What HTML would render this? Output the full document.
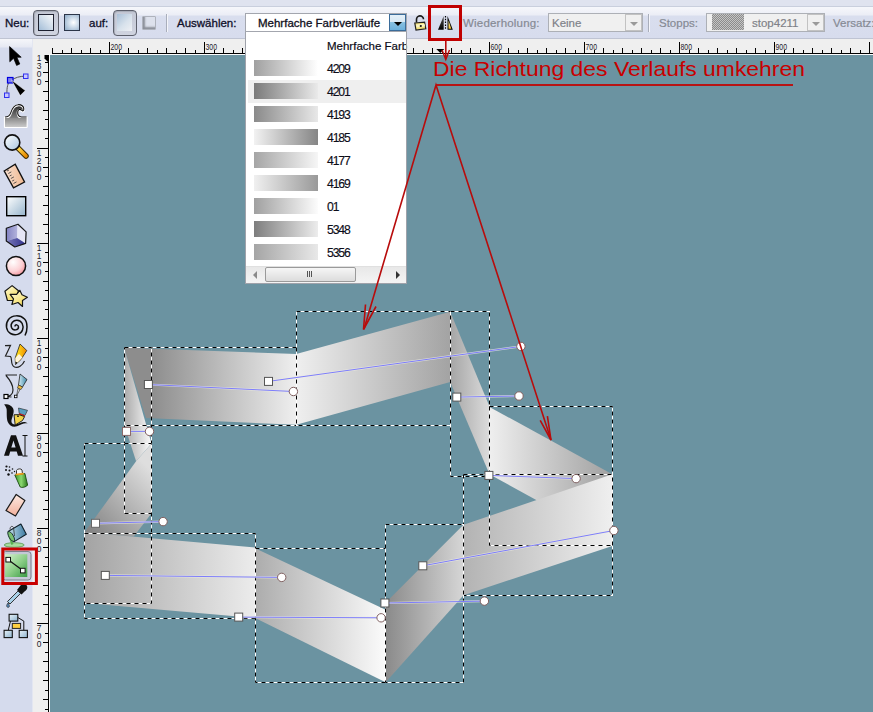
<!DOCTYPE html>
<html><head><meta charset="utf-8">
<style>
*{margin:0;padding:0;box-sizing:border-box}
html,body{width:873px;height:712px;overflow:hidden;background:#6b93a1;font-family:"Liberation Sans",sans-serif}
.a{position:absolute}
#top{left:0;top:0;width:873px;height:39px;background:linear-gradient(#dfe3ef 0,#dfe3ef 6px,#c9cfdd 6px,#c9cfdd 7px,#f6f7fb 7px,#eceef6 14.5px,#d9deee 16.5px,#d7dced 38px,#bfc4d3 38px,#bfc4d3 39px)}
.lbl{font-size:11.5px;color:#10102a;top:16px;white-space:nowrap;line-height:14px;-webkit-text-stroke:0.3px #10102a}
.dis{color:#868a94;-webkit-text-stroke:0.2px #868a94}
#lt{left:0;top:39px;width:33px;height:673px;border-right:1px solid #e3e6f1;background:linear-gradient(#f5f6fa 0,#e6e9f3 8px,#d5dbed 9px,#d5dbed 100%)}
#hr{left:33px;top:39px;width:840px;height:16px;background:#efefef}
#vr{left:33px;top:39px;width:16px;height:673px;background:#efefef}
#cv{left:50px;top:55px;width:823px;height:657px;background:#6b93a1}
.btnp{border:1px solid #5c5f6b;border-radius:4px;background:linear-gradient(#c4c8d5,#d0d4e0);box-shadow:inset 1px 1px 1px #a8acb8}
.sep{width:2px;border-left:1px solid #a9aebb;border-right:1px solid #f4f5fa}
.combo{background:#fff;border:1px solid #a3a6ae}
.comboD{background:#f0f0f0;border:1px solid #adb0b6}
.ddd{border-left:1px solid #c6c6c6;background:#f0f0f0}
.gtri{width:0;height:0;border-left:4px solid transparent;border-right:4px solid transparent;border-top:4px solid #9a9a9a}
</style></head><body>
<div id="top" class="a"></div>
<div id="lt" class="a"></div>
<div id="hr" class="a"></div>
<div id="vr" class="a"></div>
<div id="cv" class="a"></div>
<svg class="a" style="left:0;top:0" width="873" height="712" viewBox="0 0 873 712"><defs>
<linearGradient id="gA" gradientUnits="userSpaceOnUse" x1="151" y1="0" x2="296.5" y2="0"><stop offset="0" stop-color="#8d8d8d"/><stop offset="1" stop-color="#efefef"/></linearGradient>
<linearGradient id="gJ" gradientUnits="userSpaceOnUse" x1="125" y1="0" x2="150" y2="0"><stop offset="0" stop-color="#acacac"/><stop offset="1" stop-color="#f6f6f6"/></linearGradient>
<linearGradient id="gI" gradientUnits="userSpaceOnUse" x1="90" y1="530" x2="151" y2="470"><stop offset="0" stop-color="#868686"/><stop offset="1" stop-color="#dedede"/></linearGradient>
<linearGradient id="gH" gradientUnits="userSpaceOnUse" x1="84" y1="0" x2="255" y2="0"><stop offset="0" stop-color="#a3a3a3"/><stop offset="1" stop-color="#ececec"/></linearGradient>
<linearGradient id="gG" gradientUnits="userSpaceOnUse" x1="255" y1="0" x2="385.6" y2="0"><stop offset="0" stop-color="#acacac"/><stop offset="1" stop-color="#fbfbfb"/></linearGradient>
<linearGradient id="gF" gradientUnits="userSpaceOnUse" x1="385.6" y1="0" x2="463.5" y2="0"><stop offset="0" stop-color="#8a8a8a"/><stop offset="1" stop-color="#d6d6d6"/></linearGradient>
<linearGradient id="gD" gradientUnits="userSpaceOnUse" x1="489.4" y1="0" x2="612.3" y2="0"><stop offset="0" stop-color="#efefef"/><stop offset="1" stop-color="#a0a0a0"/></linearGradient>
<linearGradient id="gE" gradientUnits="userSpaceOnUse" x1="463.5" y1="0" x2="612.3" y2="0"><stop offset="0" stop-color="#b3b3b3"/><stop offset="1" stop-color="#efefef"/></linearGradient>
<linearGradient id="gB" gradientUnits="userSpaceOnUse" x1="296.3" y1="0" x2="450.2" y2="0"><stop offset="0" stop-color="#efefef"/><stop offset="1" stop-color="#a3a3a3"/></linearGradient>
<linearGradient id="gC" gradientUnits="userSpaceOnUse" x1="450.2" y1="0" x2="489.5" y2="0"><stop offset="0" stop-color="#a5a5a5"/><stop offset="1" stop-color="#dcdcdc"/></linearGradient>
</defs>
<polygon fill="url(#gA)" points="124.2,347.8 296.5,354 296.5,424.8 146,418"/>
<polygon fill="url(#gJ)" points="124.2,347.8 151.5,443.4 136.1,461.3 124.3,425"/>
<polygon fill="url(#gI)" points="151.5,443.4 151.6,513.3 133.7,536.5 84.3,532.6 136.1,461.3"/>
<polygon fill="url(#gH)" points="84.3,532.3 255.1,547.6 255.1,617.9 84.3,603"/>
<polygon fill="url(#gG)" points="255.1,548.2 385.6,609.7 385.6,682.3 255.1,617.9"/>
<polygon fill="url(#gF)" points="463.5,524.8 463.5,595.2 385.6,682.3 385.6,602.8"/>
<polygon fill="url(#gD)" points="489.4,406.9 612.3,474.3 612.3,541.7 489.4,474.3"/>
<polygon fill="url(#gE)" points="463.5,524.8 612.3,474.3 612.3,545.9 463.5,595.2"/>
<polygon fill="url(#gB)" points="296.3,354 450.2,311.8 450.2,382 296.3,424.8"/>
<polygon fill="url(#gC)" points="450.2,311.8 489.5,406.6 489.5,474.3 450.2,382"/>
<rect x="124.5" y="347.5" width="172.0" height="78.0" fill="none" stroke="#fff" stroke-width="1"/>
<rect x="124.5" y="347.5" width="172.0" height="78.0" fill="none" stroke="#000" stroke-width="1" stroke-dasharray="4 4"/>
<rect x="124.5" y="347.5" width="27.0" height="166.0" fill="none" stroke="#fff" stroke-width="1"/>
<rect x="124.5" y="347.5" width="27.0" height="166.0" fill="none" stroke="#000" stroke-width="1" stroke-dasharray="4 4"/>
<rect x="84.5" y="443.5" width="67.0" height="160.0" fill="none" stroke="#fff" stroke-width="1"/>
<rect x="84.5" y="443.5" width="67.0" height="160.0" fill="none" stroke="#000" stroke-width="1" stroke-dasharray="4 4"/>
<rect x="84.5" y="533.5" width="171.0" height="85.0" fill="none" stroke="#fff" stroke-width="1"/>
<rect x="84.5" y="533.5" width="171.0" height="85.0" fill="none" stroke="#000" stroke-width="1" stroke-dasharray="4 4"/>
<rect x="255.5" y="548.5" width="130.0" height="134.0" fill="none" stroke="#fff" stroke-width="1"/>
<rect x="255.5" y="548.5" width="130.0" height="134.0" fill="none" stroke="#000" stroke-width="1" stroke-dasharray="4 4"/>
<rect x="296.5" y="311.5" width="154.0" height="114.0" fill="none" stroke="#fff" stroke-width="1"/>
<rect x="296.5" y="311.5" width="154.0" height="114.0" fill="none" stroke="#000" stroke-width="1" stroke-dasharray="4 4"/>
<rect x="450.5" y="311.5" width="39.0" height="165.0" fill="none" stroke="#fff" stroke-width="1"/>
<rect x="450.5" y="311.5" width="39.0" height="165.0" fill="none" stroke="#000" stroke-width="1" stroke-dasharray="4 4"/>
<rect x="489.5" y="406.5" width="123.0" height="139.0" fill="none" stroke="#fff" stroke-width="1"/>
<rect x="489.5" y="406.5" width="123.0" height="139.0" fill="none" stroke="#000" stroke-width="1" stroke-dasharray="4 4"/>
<rect x="463.5" y="474.5" width="149.0" height="121.0" fill="none" stroke="#fff" stroke-width="1"/>
<rect x="463.5" y="474.5" width="149.0" height="121.0" fill="none" stroke="#000" stroke-width="1" stroke-dasharray="4 4"/>
<rect x="385.5" y="524.5" width="78.0" height="158.0" fill="none" stroke="#fff" stroke-width="1"/>
<rect x="385.5" y="524.5" width="78.0" height="158.0" fill="none" stroke="#000" stroke-width="1" stroke-dasharray="4 4"/>
<line x1="148.4" y1="384.5" x2="293.4" y2="391.5" stroke="#ecece0" stroke-opacity="0.75" stroke-width="2.2"/>
<line x1="148.4" y1="384.5" x2="293.4" y2="391.5" stroke="#7070ff" stroke-width="0.9"/>
<line x1="268.5" y1="381.4" x2="520.9" y2="346.4" stroke="#ecece0" stroke-opacity="0.75" stroke-width="2.2"/>
<line x1="268.5" y1="381.4" x2="520.9" y2="346.4" stroke="#7070ff" stroke-width="0.9"/>
<line x1="456.8" y1="397.1" x2="519" y2="396" stroke="#ecece0" stroke-opacity="0.75" stroke-width="2.2"/>
<line x1="456.8" y1="397.1" x2="519" y2="396" stroke="#7070ff" stroke-width="0.9"/>
<line x1="126.5" y1="431.4" x2="149.5" y2="431.4" stroke="#ecece0" stroke-opacity="0.75" stroke-width="2.2"/>
<line x1="126.5" y1="431.4" x2="149.5" y2="431.4" stroke="#7070ff" stroke-width="0.9"/>
<line x1="95.5" y1="523.3" x2="163.1" y2="521.6" stroke="#ecece0" stroke-opacity="0.75" stroke-width="2.2"/>
<line x1="95.5" y1="523.3" x2="163.1" y2="521.6" stroke="#7070ff" stroke-width="0.9"/>
<line x1="105.3" y1="575.4" x2="281.7" y2="577.4" stroke="#ecece0" stroke-opacity="0.75" stroke-width="2.2"/>
<line x1="105.3" y1="575.4" x2="281.7" y2="577.4" stroke="#7070ff" stroke-width="0.9"/>
<line x1="238.7" y1="617.1" x2="381.1" y2="617.8" stroke="#ecece0" stroke-opacity="0.75" stroke-width="2.2"/>
<line x1="238.7" y1="617.1" x2="381.1" y2="617.8" stroke="#7070ff" stroke-width="0.9"/>
<line x1="384.9" y1="603" x2="484.4" y2="601.1" stroke="#ecece0" stroke-opacity="0.75" stroke-width="2.2"/>
<line x1="384.9" y1="603" x2="484.4" y2="601.1" stroke="#7070ff" stroke-width="0.9"/>
<line x1="422.8" y1="565.8" x2="613.9" y2="530.5" stroke="#ecece0" stroke-opacity="0.75" stroke-width="2.2"/>
<line x1="422.8" y1="565.8" x2="613.9" y2="530.5" stroke="#7070ff" stroke-width="0.9"/>
<line x1="488.9" y1="475.4" x2="576.1" y2="478.6" stroke="#ecece0" stroke-opacity="0.75" stroke-width="2.2"/>
<line x1="488.9" y1="475.4" x2="576.1" y2="478.6" stroke="#7070ff" stroke-width="0.9"/>
<rect x="144.4" y="380.5" width="8" height="8" fill="#fff" stroke="#555" stroke-width="1"/>
<circle cx="293.4" cy="391.5" r="4.2" fill="#fff" stroke="#806060" stroke-width="1"/>
<rect x="264.5" y="377.4" width="8" height="8" fill="#fff" stroke="#555" stroke-width="1"/>
<circle cx="520.9" cy="346.4" r="4.2" fill="#fff" stroke="#806060" stroke-width="1"/>
<rect x="452.8" y="393.1" width="8" height="8" fill="#fff" stroke="#555" stroke-width="1"/>
<circle cx="519" cy="396" r="4.2" fill="#fff" stroke="#806060" stroke-width="1"/>
<rect x="122.5" y="427.4" width="8" height="8" fill="#fff" stroke="#8a6a6a" stroke-width="1"/>
<circle cx="149.5" cy="431.4" r="4.2" fill="#fff" stroke="#806060" stroke-width="1"/>
<rect x="91.5" y="519.3" width="8" height="8" fill="#fff" stroke="#666" stroke-width="1"/>
<circle cx="163.1" cy="521.6" r="4.2" fill="#fff" stroke="#806060" stroke-width="1"/>
<rect x="101.3" y="571.4" width="8" height="8" fill="#fff" stroke="#555" stroke-width="1"/>
<circle cx="281.7" cy="577.4" r="4.2" fill="#fff" stroke="#806060" stroke-width="1"/>
<rect x="234.7" y="613.1" width="8" height="8" fill="#fff" stroke="#555" stroke-width="1"/>
<circle cx="381.1" cy="617.8" r="4.2" fill="#fff" stroke="#806060" stroke-width="1"/>
<rect x="380.9" y="599" width="8" height="8" fill="#fff" stroke="#555" stroke-width="1"/>
<circle cx="484.4" cy="601.1" r="4.2" fill="#fff" stroke="#806060" stroke-width="1"/>
<rect x="418.8" y="561.8" width="8" height="8" fill="#fff" stroke="#555" stroke-width="1"/>
<circle cx="613.9" cy="530.5" r="4.2" fill="#fff" stroke="#806060" stroke-width="1"/>
<rect x="484.9" y="471.4" width="8" height="8" fill="#fff" stroke="#555" stroke-width="1"/>
<circle cx="576.1" cy="478.6" r="4.2" fill="#fff" stroke="#806060" stroke-width="1"/>
</svg>

<!-- toolbar -->
<div class="a lbl" style="left:5px">Neu:</div>
<div class="a btnp" style="left:33px;top:10px;width:26px;height:26px"></div>
<div class="a" style="left:38px;top:14px;width:16px;height:17px;border:1.6px solid #1d2030;background:linear-gradient(45deg,#a3bdd7 0,#d4e0ec 55%,#f6f8fb 100%)"></div>
<div class="a" style="left:64px;top:14px;width:16px;height:17px;border:1.4px solid #2c3548;background:radial-gradient(circle at 60% 50%,#ffffff 0,#d6e2ee 35%,#8eabc8 100%)"></div>
<div class="a lbl" style="left:89px">auf:</div>
<div class="a btnp" style="left:113px;top:10px;width:24px;height:26px"></div>
<div class="a" style="left:117px;top:14px;width:15px;height:17px;background:linear-gradient(135deg,#a9c0d8 0,#d8e2ec 55%,#eef0f4 100%)"></div>
<div class="a" style="left:142px;top:16px;width:14px;height:14px;border:1px solid #aeb2bc;border-radius:1px;background:#dde1ec;box-shadow:inset 2px -2px 2px #8c909a"></div>
<div class="a sep" style="left:166px;top:14px;height:18px"></div>
<div class="a lbl" style="left:177px">Auswählen:</div>
<div class="a combo" style="left:245px;top:13px;width:162px;height:19px"></div>
<div class="a lbl" style="left:258px;top:16px;color:#111">Mehrfache Farbverläufe</div>
<div class="a" style="left:389px;top:14px;width:17px;height:17px;border:1px solid #3b6c9a;background:linear-gradient(#e4f0f8 0,#d8e8f4 45%,#88c0e0 50%,#6cb0dc 100%)"></div>
<div class="a" style="left:394px;top:22px;width:0;height:0;border-left:4px solid transparent;border-right:4px solid transparent;border-top:4.5px solid #000"></div>
<svg class="a" style="left:412px;top:14px" width="16" height="18" viewBox="0 0 16 18">
 <path d="M4.5 8.5 V5.5 A3.5 3.5 0 0 1 11.5 5.2" fill="none" stroke="#1a1a1a" stroke-width="1.6"/>
 <path d="M2.8 9 L12.6 8.2 L13.8 14.8 L4 16 Z" fill="#f2e07a" stroke="#202020" stroke-width="1.2"/>
 <path d="M4 10.5 L12.5 9.8 L13.2 12.5 L4.6 13.6Z" fill="#fbf4c0"/>
 <circle cx="8.8" cy="12" r="1.1" fill="#111"/>
</svg>
<svg class="a" style="left:436px;top:14px" width="20" height="18" viewBox="0 0 20 18">
 <defs><linearGradient id="fl1" x1="0" y1="0" x2="0" y2="1"><stop offset="0" stop-color="#555"/><stop offset="1" stop-color="#000"/></linearGradient>
 <linearGradient id="fl2" x1="0" y1="0" x2="0" y2="1"><stop offset="0" stop-color="#fff6b0"/><stop offset="1" stop-color="#f0c030"/></linearGradient></defs>
 <path d="M2 15.7 L7.7 2 L7.7 15.7Z" fill="url(#fl1)"/>
 <path d="M11.5 2 L16.8 15.7 L11.5 15.7Z" fill="#000"/>
 <path d="M12.5 6.5 L15.3 14.8 L12.5 14.8Z" fill="url(#fl2)"/>
 <line x1="9.5" y1="2" x2="9.5" y2="16" stroke="#000" stroke-width="1.2" stroke-dasharray="1.5 1.3"/>
</svg>
<div class="a" style="left:428px;top:5px;width:34px;height:36px;border:3px solid #c00000"></div>
<div class="a lbl dis" style="left:463px;letter-spacing:0.2px">Wiederholung:</div>
<div class="a comboD" style="left:548px;top:13px;width:95px;height:19px"></div>
<div class="a lbl dis" style="left:552px;color:#7e7e84">Keine</div>
<div class="a ddd" style="left:625px;top:14px;width:17px;height:17px;border:1px solid #c2c2c2"></div>
<div class="a gtri" style="left:630px;top:22px"></div>
<div class="a sep" style="left:648px;top:14px;height:18px"></div>
<div class="a lbl dis" style="left:659px">Stopps:</div>
<div class="a comboD" style="left:706px;top:13px;width:119px;height:19px"></div>
<div class="a" style="left:712px;top:14px;width:32px;height:16px;background-color:#aaa;background-image:repeating-conic-gradient(#8c8c8c 0 25%,#c4c4c4 0 50%);background-size:2px 2px"></div>
<div class="a lbl dis" style="left:752px;color:#7e7e84">stop4211</div>
<div class="a ddd" style="left:807px;top:14px;width:17px;height:17px;border:1px solid #c2c2c2"></div>
<div class="a gtri" style="left:812px;top:22px"></div>
<div class="a lbl dis" style="left:833px">Versatz:</div>

<svg class="a" style="left:0;top:39px" width="873" height="17" viewBox="0 39 873 17">
<rect x="52" y="53" width="821" height="1" fill="#000"/>
<rect x="49" y="54" width="824" height="1" fill="#fafafa"/>
<rect x="52" y="48" width="1" height="5" fill="#000"/>
<rect x="62" y="50" width="1" height="3" fill="#000"/>
<rect x="71" y="48" width="1" height="5" fill="#000"/>
<rect x="81" y="50" width="1" height="3" fill="#000"/>
<rect x="90" y="48" width="1" height="5" fill="#000"/>
<rect x="100" y="50" width="1" height="3" fill="#000"/>
<rect x="109" y="42" width="1" height="11" fill="#000"/>
<rect x="119" y="50" width="1" height="3" fill="#000"/>
<rect x="128" y="48" width="1" height="5" fill="#000"/>
<rect x="138" y="50" width="1" height="3" fill="#000"/>
<rect x="147" y="48" width="1" height="5" fill="#000"/>
<rect x="157" y="50" width="1" height="3" fill="#000"/>
<rect x="166" y="48" width="1" height="5" fill="#000"/>
<rect x="176" y="50" width="1" height="3" fill="#000"/>
<rect x="185" y="48" width="1" height="5" fill="#000"/>
<rect x="195" y="50" width="1" height="3" fill="#000"/>
<rect x="204" y="42" width="1" height="11" fill="#000"/>
<rect x="214" y="50" width="1" height="3" fill="#000"/>
<rect x="223" y="48" width="1" height="5" fill="#000"/>
<rect x="233" y="50" width="1" height="3" fill="#000"/>
<rect x="242" y="48" width="1" height="5" fill="#000"/>
<rect x="252" y="50" width="1" height="3" fill="#000"/>
<rect x="261" y="48" width="1" height="5" fill="#000"/>
<rect x="271" y="50" width="1" height="3" fill="#000"/>
<rect x="280" y="48" width="1" height="5" fill="#000"/>
<rect x="290" y="50" width="1" height="3" fill="#000"/>
<rect x="299" y="42" width="1" height="11" fill="#000"/>
<rect x="309" y="50" width="1" height="3" fill="#000"/>
<rect x="318" y="48" width="1" height="5" fill="#000"/>
<rect x="328" y="50" width="1" height="3" fill="#000"/>
<rect x="337" y="48" width="1" height="5" fill="#000"/>
<rect x="347" y="50" width="1" height="3" fill="#000"/>
<rect x="356" y="48" width="1" height="5" fill="#000"/>
<rect x="366" y="50" width="1" height="3" fill="#000"/>
<rect x="375" y="48" width="1" height="5" fill="#000"/>
<rect x="385" y="50" width="1" height="3" fill="#000"/>
<rect x="394" y="42" width="1" height="11" fill="#000"/>
<rect x="404" y="50" width="1" height="3" fill="#000"/>
<rect x="413" y="48" width="1" height="5" fill="#000"/>
<rect x="423" y="50" width="1" height="3" fill="#000"/>
<rect x="432" y="48" width="1" height="5" fill="#000"/>
<rect x="442" y="50" width="1" height="3" fill="#000"/>
<rect x="451" y="48" width="1" height="5" fill="#000"/>
<rect x="461" y="50" width="1" height="3" fill="#000"/>
<rect x="470" y="48" width="1" height="5" fill="#000"/>
<rect x="480" y="50" width="1" height="3" fill="#000"/>
<rect x="489" y="42" width="1" height="11" fill="#000"/>
<rect x="499" y="50" width="1" height="3" fill="#000"/>
<rect x="508" y="48" width="1" height="5" fill="#000"/>
<rect x="518" y="50" width="1" height="3" fill="#000"/>
<rect x="527" y="48" width="1" height="5" fill="#000"/>
<rect x="537" y="50" width="1" height="3" fill="#000"/>
<rect x="546" y="48" width="1" height="5" fill="#000"/>
<rect x="556" y="50" width="1" height="3" fill="#000"/>
<rect x="565" y="48" width="1" height="5" fill="#000"/>
<rect x="575" y="50" width="1" height="3" fill="#000"/>
<rect x="584" y="42" width="1" height="11" fill="#000"/>
<rect x="594" y="50" width="1" height="3" fill="#000"/>
<rect x="603" y="48" width="1" height="5" fill="#000"/>
<rect x="613" y="50" width="1" height="3" fill="#000"/>
<rect x="622" y="48" width="1" height="5" fill="#000"/>
<rect x="632" y="50" width="1" height="3" fill="#000"/>
<rect x="641" y="48" width="1" height="5" fill="#000"/>
<rect x="651" y="50" width="1" height="3" fill="#000"/>
<rect x="660" y="48" width="1" height="5" fill="#000"/>
<rect x="670" y="50" width="1" height="3" fill="#000"/>
<rect x="679" y="42" width="1" height="11" fill="#000"/>
<rect x="689" y="50" width="1" height="3" fill="#000"/>
<rect x="698" y="48" width="1" height="5" fill="#000"/>
<rect x="708" y="50" width="1" height="3" fill="#000"/>
<rect x="717" y="48" width="1" height="5" fill="#000"/>
<rect x="727" y="50" width="1" height="3" fill="#000"/>
<rect x="736" y="48" width="1" height="5" fill="#000"/>
<rect x="746" y="50" width="1" height="3" fill="#000"/>
<rect x="755" y="48" width="1" height="5" fill="#000"/>
<rect x="765" y="50" width="1" height="3" fill="#000"/>
<rect x="774" y="42" width="1" height="11" fill="#000"/>
<rect x="784" y="50" width="1" height="3" fill="#000"/>
<rect x="793" y="48" width="1" height="5" fill="#000"/>
<rect x="803" y="50" width="1" height="3" fill="#000"/>
<rect x="812" y="48" width="1" height="5" fill="#000"/>
<rect x="822" y="50" width="1" height="3" fill="#000"/>
<rect x="831" y="48" width="1" height="5" fill="#000"/>
<rect x="841" y="50" width="1" height="3" fill="#000"/>
<rect x="850" y="48" width="1" height="5" fill="#000"/>
<rect x="860" y="50" width="1" height="3" fill="#000"/>
<rect x="869" y="42" width="1" height="11" fill="#000"/>
<text x="110.5" y="50.3" font-size="8.6" textLength="11.5" lengthAdjust="spacingAndGlyphs" fill="#1a1a2a" font-family="Liberation Sans">200</text>
<text x="205.5" y="50.3" font-size="8.6" textLength="11.5" lengthAdjust="spacingAndGlyphs" fill="#1a1a2a" font-family="Liberation Sans">300</text>
<text x="300.5" y="50.3" font-size="8.6" textLength="11.5" lengthAdjust="spacingAndGlyphs" fill="#1a1a2a" font-family="Liberation Sans">400</text>
<text x="395.5" y="50.3" font-size="8.6" textLength="11.5" lengthAdjust="spacingAndGlyphs" fill="#1a1a2a" font-family="Liberation Sans">500</text>
<text x="490.5" y="50.3" font-size="8.6" textLength="11.5" lengthAdjust="spacingAndGlyphs" fill="#1a1a2a" font-family="Liberation Sans">600</text>
<text x="585.5" y="50.3" font-size="8.6" textLength="11.5" lengthAdjust="spacingAndGlyphs" fill="#1a1a2a" font-family="Liberation Sans">700</text>
<text x="680.5" y="50.3" font-size="8.6" textLength="11.5" lengthAdjust="spacingAndGlyphs" fill="#1a1a2a" font-family="Liberation Sans">800</text>
<text x="775.5" y="50.3" font-size="8.6" textLength="11.5" lengthAdjust="spacingAndGlyphs" fill="#1a1a2a" font-family="Liberation Sans">900</text>
<path d="M436.3 49 L444.3 49 L440.3 53 Z" fill="#000"/>
</svg>
<svg class="a" style="left:0;top:0" width="50" height="712" viewBox="0 0 50 712">
<rect x="48" y="55" width="1" height="657" fill="#000"/>
<rect x="49" y="55" width="1" height="657" fill="#fafafa"/>
<rect x="45" y="62" width="3" height="1" fill="#000"/>
<rect x="43" y="72" width="5" height="1" fill="#000"/>
<rect x="45" y="81" width="3" height="1" fill="#000"/>
<rect x="43" y="91" width="5" height="1" fill="#000"/>
<rect x="45" y="100" width="3" height="1" fill="#000"/>
<rect x="43" y="110" width="5" height="1" fill="#000"/>
<rect x="45" y="119" width="3" height="1" fill="#000"/>
<rect x="43" y="129" width="5" height="1" fill="#000"/>
<rect x="45" y="138" width="3" height="1" fill="#000"/>
<rect x="37" y="148" width="11" height="1" fill="#000"/>
<rect x="45" y="157" width="3" height="1" fill="#000"/>
<rect x="43" y="167" width="5" height="1" fill="#000"/>
<rect x="45" y="176" width="3" height="1" fill="#000"/>
<rect x="43" y="186" width="5" height="1" fill="#000"/>
<rect x="45" y="195" width="3" height="1" fill="#000"/>
<rect x="43" y="205" width="5" height="1" fill="#000"/>
<rect x="45" y="214" width="3" height="1" fill="#000"/>
<rect x="43" y="224" width="5" height="1" fill="#000"/>
<rect x="45" y="233" width="3" height="1" fill="#000"/>
<rect x="37" y="243" width="11" height="1" fill="#000"/>
<rect x="45" y="252" width="3" height="1" fill="#000"/>
<rect x="43" y="262" width="5" height="1" fill="#000"/>
<rect x="45" y="271" width="3" height="1" fill="#000"/>
<rect x="43" y="281" width="5" height="1" fill="#000"/>
<rect x="45" y="290" width="3" height="1" fill="#000"/>
<rect x="43" y="300" width="5" height="1" fill="#000"/>
<rect x="45" y="309" width="3" height="1" fill="#000"/>
<rect x="43" y="319" width="5" height="1" fill="#000"/>
<rect x="45" y="328" width="3" height="1" fill="#000"/>
<rect x="37" y="338" width="11" height="1" fill="#000"/>
<rect x="45" y="348" width="3" height="1" fill="#000"/>
<rect x="43" y="357" width="5" height="1" fill="#000"/>
<rect x="45" y="367" width="3" height="1" fill="#000"/>
<rect x="43" y="376" width="5" height="1" fill="#000"/>
<rect x="45" y="386" width="3" height="1" fill="#000"/>
<rect x="43" y="395" width="5" height="1" fill="#000"/>
<rect x="45" y="405" width="3" height="1" fill="#000"/>
<rect x="43" y="414" width="5" height="1" fill="#000"/>
<rect x="45" y="424" width="3" height="1" fill="#000"/>
<rect x="37" y="433" width="11" height="1" fill="#000"/>
<rect x="45" y="443" width="3" height="1" fill="#000"/>
<rect x="43" y="452" width="5" height="1" fill="#000"/>
<rect x="45" y="462" width="3" height="1" fill="#000"/>
<rect x="43" y="471" width="5" height="1" fill="#000"/>
<rect x="45" y="481" width="3" height="1" fill="#000"/>
<rect x="43" y="490" width="5" height="1" fill="#000"/>
<rect x="45" y="500" width="3" height="1" fill="#000"/>
<rect x="43" y="509" width="5" height="1" fill="#000"/>
<rect x="45" y="519" width="3" height="1" fill="#000"/>
<rect x="37" y="528" width="11" height="1" fill="#000"/>
<rect x="45" y="538" width="3" height="1" fill="#000"/>
<rect x="43" y="547" width="5" height="1" fill="#000"/>
<rect x="45" y="557" width="3" height="1" fill="#000"/>
<rect x="43" y="566" width="5" height="1" fill="#000"/>
<rect x="45" y="576" width="3" height="1" fill="#000"/>
<rect x="43" y="585" width="5" height="1" fill="#000"/>
<rect x="45" y="595" width="3" height="1" fill="#000"/>
<rect x="43" y="604" width="5" height="1" fill="#000"/>
<rect x="45" y="614" width="3" height="1" fill="#000"/>
<rect x="37" y="623" width="11" height="1" fill="#000"/>
<rect x="45" y="633" width="3" height="1" fill="#000"/>
<rect x="43" y="642" width="5" height="1" fill="#000"/>
<rect x="45" y="652" width="3" height="1" fill="#000"/>
<rect x="43" y="661" width="5" height="1" fill="#000"/>
<rect x="45" y="671" width="3" height="1" fill="#000"/>
<rect x="43" y="680" width="5" height="1" fill="#000"/>
<rect x="45" y="690" width="3" height="1" fill="#000"/>
<rect x="43" y="699" width="5" height="1" fill="#000"/>
<rect x="45" y="709" width="3" height="1" fill="#000"/>
<text x="39" y="61.2" font-size="8.4" text-anchor="middle" fill="#1a1a2a" font-family="Liberation Sans">1</text>
<text x="39" y="69.2" font-size="8.4" text-anchor="middle" fill="#1a1a2a" font-family="Liberation Sans">3</text>
<text x="39" y="77.2" font-size="8.4" text-anchor="middle" fill="#1a1a2a" font-family="Liberation Sans">0</text>
<text x="39" y="85.2" font-size="8.4" text-anchor="middle" fill="#1a1a2a" font-family="Liberation Sans">0</text>
<text x="39" y="156.2" font-size="8.4" text-anchor="middle" fill="#1a1a2a" font-family="Liberation Sans">1</text>
<text x="39" y="164.2" font-size="8.4" text-anchor="middle" fill="#1a1a2a" font-family="Liberation Sans">2</text>
<text x="39" y="172.2" font-size="8.4" text-anchor="middle" fill="#1a1a2a" font-family="Liberation Sans">0</text>
<text x="39" y="180.2" font-size="8.4" text-anchor="middle" fill="#1a1a2a" font-family="Liberation Sans">0</text>
<text x="39" y="251.2" font-size="8.4" text-anchor="middle" fill="#1a1a2a" font-family="Liberation Sans">1</text>
<text x="39" y="259.2" font-size="8.4" text-anchor="middle" fill="#1a1a2a" font-family="Liberation Sans">1</text>
<text x="39" y="267.2" font-size="8.4" text-anchor="middle" fill="#1a1a2a" font-family="Liberation Sans">0</text>
<text x="39" y="275.2" font-size="8.4" text-anchor="middle" fill="#1a1a2a" font-family="Liberation Sans">0</text>
<text x="39" y="346.3" font-size="8.4" text-anchor="middle" fill="#1a1a2a" font-family="Liberation Sans">1</text>
<text x="39" y="354.3" font-size="8.4" text-anchor="middle" fill="#1a1a2a" font-family="Liberation Sans">0</text>
<text x="39" y="362.3" font-size="8.4" text-anchor="middle" fill="#1a1a2a" font-family="Liberation Sans">0</text>
<text x="39" y="370.3" font-size="8.4" text-anchor="middle" fill="#1a1a2a" font-family="Liberation Sans">0</text>
<text x="39" y="441.4" font-size="8.4" text-anchor="middle" fill="#1a1a2a" font-family="Liberation Sans">9</text>
<text x="39" y="449.4" font-size="8.4" text-anchor="middle" fill="#1a1a2a" font-family="Liberation Sans">0</text>
<text x="39" y="457.4" font-size="8.4" text-anchor="middle" fill="#1a1a2a" font-family="Liberation Sans">0</text>
<text x="39" y="536.4" font-size="8.4" text-anchor="middle" fill="#1a1a2a" font-family="Liberation Sans">8</text>
<text x="39" y="544.4" font-size="8.4" text-anchor="middle" fill="#1a1a2a" font-family="Liberation Sans">0</text>
<text x="39" y="552.4" font-size="8.4" text-anchor="middle" fill="#1a1a2a" font-family="Liberation Sans">0</text>
<text x="39" y="631.4" font-size="8.4" text-anchor="middle" fill="#1a1a2a" font-family="Liberation Sans">7</text>
<text x="39" y="639.4" font-size="8.4" text-anchor="middle" fill="#1a1a2a" font-family="Liberation Sans">0</text>
<text x="39" y="647.4" font-size="8.4" text-anchor="middle" fill="#1a1a2a" font-family="Liberation Sans">0</text>
<text x="39" y="726.5" font-size="8.4" text-anchor="middle" fill="#1a1a2a" font-family="Liberation Sans">6</text>
<text x="39" y="734.5" font-size="8.4" text-anchor="middle" fill="#1a1a2a" font-family="Liberation Sans">0</text>
<text x="39" y="742.5" font-size="8.4" text-anchor="middle" fill="#1a1a2a" font-family="Liberation Sans">0</text>
<path d="M44.5 55 L48 55 L48 62 L44.5 58.5 Z" fill="#000"/>
</svg>
<div class="a" style="left:245px;top:32px;width:162px;height:252px;background:#fff;border:1px solid #9fa2aa;border-top:none;overflow:hidden">
<div class="a" style="left:0;top:-1px;width:160px;height:1px;background:#a3a6ae"></div>
<div class="a" style="left:2px;top:48px;width:158px;height:23px;background:#efefef"></div>
<div class="a" style="left:81px;top:6.5px;font-size:11.5px;line-height:14px;color:#0c0c18;-webkit-text-stroke:0.2px #0c0c18;white-space:nowrap">Mehrfache Farbverläufe</div>
<div class="a" style="left:8px;top:28px;width:64px;height:16px;background:linear-gradient(90deg,#a0a0a0,#ffffff)"></div>
<div class="a" style="left:81px;top:30.3px;font-size:12.2px;line-height:14px;letter-spacing:-1.1px;color:#0c0c18;-webkit-text-stroke:0.15px #0c0c18">4209</div>
<div class="a" style="left:8px;top:51px;width:64px;height:16px;background:linear-gradient(90deg,#7a7a7a,#eaeaea)"></div>
<div class="a" style="left:81px;top:53.3px;font-size:12.2px;line-height:14px;letter-spacing:-1.1px;color:#0c0c18;-webkit-text-stroke:0.15px #0c0c18">4201</div>
<div class="a" style="left:8px;top:74px;width:64px;height:16px;background:linear-gradient(90deg,#8a8a8a,#e8e8e8)"></div>
<div class="a" style="left:81px;top:76.3px;font-size:12.2px;line-height:14px;letter-spacing:-1.1px;color:#0c0c18;-webkit-text-stroke:0.15px #0c0c18">4193</div>
<div class="a" style="left:8px;top:97px;width:64px;height:16px;background:linear-gradient(90deg,#f2f2f2,#858585)"></div>
<div class="a" style="left:81px;top:99.3px;font-size:12.2px;line-height:14px;letter-spacing:-1.1px;color:#0c0c18;-webkit-text-stroke:0.15px #0c0c18">4185</div>
<div class="a" style="left:8px;top:120px;width:64px;height:16px;background:linear-gradient(90deg,#a5a5a5,#f6f6f6)"></div>
<div class="a" style="left:81px;top:122.3px;font-size:12.2px;line-height:14px;letter-spacing:-1.1px;color:#0c0c18;-webkit-text-stroke:0.15px #0c0c18">4177</div>
<div class="a" style="left:8px;top:143px;width:64px;height:16px;background:linear-gradient(90deg,#f0f0f0,#999999)"></div>
<div class="a" style="left:81px;top:145.3px;font-size:12.2px;line-height:14px;letter-spacing:-1.1px;color:#0c0c18;-webkit-text-stroke:0.15px #0c0c18">4169</div>
<div class="a" style="left:8px;top:166px;width:64px;height:16px;background:linear-gradient(90deg,#a0a0a0,#fcfcfc)"></div>
<div class="a" style="left:81px;top:168.3px;font-size:12.2px;line-height:14px;letter-spacing:-1.1px;color:#0c0c18;-webkit-text-stroke:0.15px #0c0c18">01</div>
<div class="a" style="left:8px;top:189px;width:64px;height:16px;background:linear-gradient(90deg,#7e7e7e,#ececec)"></div>
<div class="a" style="left:81px;top:191.3px;font-size:12.2px;line-height:14px;letter-spacing:-1.1px;color:#0c0c18;-webkit-text-stroke:0.15px #0c0c18">5348</div>
<div class="a" style="left:8px;top:212px;width:64px;height:16px;background:linear-gradient(90deg,#a5a5a5,#e8e8e8)"></div>
<div class="a" style="left:81px;top:214.3px;font-size:12.2px;line-height:14px;letter-spacing:-1.1px;color:#0c0c18;-webkit-text-stroke:0.15px #0c0c18">5356</div>
<div class="a" style="left:0;top:234px;width:160px;height:17px;background:linear-gradient(#e8e8e8,#f4f4f4);border-top:1px solid #e0e0e0"></div>
<div class="a" style="left:19px;top:235px;width:91px;height:15px;border:1px solid #9a9a9a;border-radius:2px;background:linear-gradient(#f6f6f6,#dcdcdc)"></div>
<div class="a" style="left:61px;top:239px;width:1px;height:6px;background:#555;box-shadow:2px 0 0 #555,4px 0 0 #555"></div>
<div class="a" style="left:7px;top:239px;width:0;height:0;border-top:4px solid transparent;border-bottom:4px solid transparent;border-right:4px solid #8a8a8a"></div>
<div class="a" style="left:150px;top:239px;width:0;height:0;border-top:4px solid transparent;border-bottom:4px solid transparent;border-left:4px solid #333"></div>
</div>
<svg class="a" style="left:0;top:0" width="40" height="712" viewBox="0 0 40 712"><defs>
<linearGradient id="twk" x1="0" y1="0" x2="0" y2="1"><stop offset="0" stop-color="#2a2a2a"/><stop offset="0.55" stop-color="#7a7a7a"/><stop offset="1" stop-color="#cfcfcf"/></linearGradient><linearGradient id="twk2" x1="0" y1="0" x2="0" y2="1"><stop offset="0" stop-color="#8a8a8a"/><stop offset="1" stop-color="#cacaca"/></linearGradient>
<linearGradient id="lens" x1="0" y1="0" x2="1" y2="1"><stop offset="0" stop-color="#ffffff"/><stop offset="1" stop-color="#a9c6e0"/></linearGradient>
<linearGradient id="orng" x1="0" y1="0" x2="1" y2="1"><stop offset="0" stop-color="#ffd84a"/><stop offset="1" stop-color="#e88a00"/></linearGradient>
<linearGradient id="rct" x1="0" y1="0" x2="1" y2="1"><stop offset="0" stop-color="#ffffff"/><stop offset="1" stop-color="#95b4cc"/></linearGradient>
<radialGradient id="ell" cx="0.35" cy="0.3" r="0.8"><stop offset="0" stop-color="#ffffff"/><stop offset="0.6" stop-color="#fcd0d4"/><stop offset="1" stop-color="#f28890"/></radialGradient>
<linearGradient id="yel" x1="0" y1="0" x2="0.6" y2="1"><stop offset="0" stop-color="#fffce0"/><stop offset="1" stop-color="#f4dc60"/></linearGradient>
<linearGradient id="pcl" x1="0" y1="0" x2="1" y2="0"><stop offset="0" stop-color="#ffee20"/><stop offset="1" stop-color="#f08a00"/></linearGradient>
<linearGradient id="pen" x1="0" y1="0" x2="1" y2="0"><stop offset="0" stop-color="#d8ecf4"/><stop offset="1" stop-color="#3a88a8"/></linearGradient>
<linearGradient id="grn" x1="0" y1="0" x2="1" y2="1"><stop offset="0" stop-color="#d6f0d0"/><stop offset="0.5" stop-color="#8fd08a"/><stop offset="1" stop-color="#3a9a44"/></linearGradient>
<linearGradient id="spr" x1="0" y1="0" x2="1" y2="0"><stop offset="0" stop-color="#3a9a28"/><stop offset="0.5" stop-color="#8ad870"/><stop offset="1" stop-color="#2a7a1a"/></linearGradient>
<linearGradient id="ers" x1="0" y1="0" x2="0" y2="1"><stop offset="0" stop-color="#fdeae2"/><stop offset="1" stop-color="#f2b09c"/></linearGradient>
<linearGradient id="bkt" x1="0" y1="0" x2="1" y2="0"><stop offset="0" stop-color="#c8e4f0"/><stop offset="1" stop-color="#3a78a0"/></linearGradient>
<linearGradient id="box" x1="0" y1="0" x2="1" y2="1"><stop offset="0" stop-color="#e8f2f8"/><stop offset="1" stop-color="#8eb4d0"/></linearGradient>
<linearGradient id="ruler" x1="0" y1="0" x2="1" y2="0"><stop offset="0" stop-color="#f8e0d0"/><stop offset="1" stop-color="#f0b890"/></linearGradient>
<linearGradient id="bxl" x1="0" y1="0" x2="1" y2="0"><stop offset="0" stop-color="#8282c2"/><stop offset="1" stop-color="#b4b4dc"/></linearGradient><linearGradient id="bxb" x1="0" y1="0" x2="1" y2="0"><stop offset="0" stop-color="#7a7ab8"/><stop offset="1" stop-color="#30308e"/></linearGradient></defs><g transform="translate(0,41)"><path d="M9.6 5.6 L9.8 20.8 L13.6 17.2 L16.6 24.4 L19.8 23 L16.9 16.3 L21.2 16.2 Z" fill="#000" stroke="#000" stroke-width="0.7" stroke-linejoin="round"/></g><g transform="translate(0,71)"><path d="M7 24 C6.5 16 8 11 11 9.5 C15 6.5 20 5.2 25 5.2" fill="none" stroke="#555" stroke-width="1"/><rect x="7.5" y="6.5" width="5.5" height="5.5" fill="#8080f0" stroke="#0000e0" stroke-width="1.2"/><rect x="23.5" y="3" width="4.5" height="4.5" fill="#c8c8ff" stroke="#3030f0" stroke-width="1"/><rect x="4.5" y="22" width="4.5" height="4.5" fill="#c8c8ff" stroke="#3030f0" stroke-width="1"/><path d="M11.5 9 L25.3 19.6 L20.2 24.6 Z" fill="#000" stroke="#fff" stroke-width="0.5"/></g><g transform="translate(0,101)"><path d="M5 26 L5 16.6 C8 16.6 9.5 15.5 10.5 13 C12 8 14 4.5 18 4.3 C21.5 4 23.8 6 23.8 8.5 C23.8 10.8 22.5 10.8 21.5 9.8 C20 8.3 18.2 9 17.8 11 C17.4 14 18.5 16.6 21.5 16.6 L26.6 16.6 L26.6 26 Z" fill="url(#twk)" stroke="#fff" stroke-width="2.2" stroke-linejoin="round"/><path d="M5 16.6 C8 16.6 9.5 15.5 10.5 13 C12 8 14 4.5 18 4.3 C21.5 4 23.8 6 23.8 8.5 C23.8 10.8 22.5 10.8 21.5 9.8 C20 8.3 18.2 9 17.8 11 C17.4 14 18.5 16.6 21.5 16.6 L26.6 16.6" fill="none" stroke="#111" stroke-width="1.1" stroke-linejoin="round" transform="translate(0,-0.6)"/><rect x="5" y="17" width="21.6" height="9" fill="url(#twk2)"/></g><g transform="translate(0,131)"><line x1="18.5" y1="17.5" x2="26" y2="25" stroke="#3a2a00" stroke-width="5.5" stroke-linecap="round"/><line x1="18.5" y1="17.5" x2="26" y2="25" stroke="url(#orng)" stroke-width="3.5" stroke-linecap="round"/><circle cx="12.2" cy="11.5" r="7.6" fill="url(#lens)" stroke="#111" stroke-width="1.6"/></g><g transform="translate(0,161)"><path d="M4.2 10 L15.2 3.2 L24.5 21 L13.5 26.8 Z" fill="url(#ruler)" stroke="#111" stroke-width="1.4"/><path d="M7 10 l2 -1 M8.3 12.5 l3 -1.6 M9.6 15 l2 -1 M10.9 17.5 l3 -1.6 M12.2 20 l2 -1 M13.5 22.5 l3 -1.6" stroke="#333" stroke-width="0.8"/></g><g transform="translate(0,191)"><rect x="6.7" y="5.7" width="19" height="19" fill="url(#rct)" stroke="#000" stroke-width="1.4"/></g><g transform="translate(0,221)"><path d="M6.3 7.3 L17.5 3.8 L17.1 17 L6.3 20.1 Z" fill="url(#bxl)"/><path d="M17.5 3.8 L26.1 10.9 L25.6 22.4 L17.1 17 Z" fill="#e6e6f6"/><path d="M6.3 20.1 L17.1 17 L25.6 22.4 L14.8 26 Z" fill="url(#bxb)"/><path d="M6.3 7.3 L18 3.3 L26.1 10.9 L25.6 22.4 L14.8 26 L6.3 20.1 Z" fill="none" stroke="#151515" stroke-width="1.2" stroke-linejoin="round"/></g><g transform="translate(0,251)"><circle cx="16" cy="15" r="9.6" fill="url(#ell)" stroke="#111" stroke-width="1.5"/></g><g transform="translate(0,281)"><path d="M12.1 4.6 L18.5 9.8 L15.5 19.5 L7.4 19.5 L4.9 10.2 Z" fill="url(#yel)" stroke="#151515" stroke-width="1.2" stroke-linejoin="round"/><path d="M19.8 9.3 L22 13.8 L27.4 16.3 L22.5 19.5 L22.5 25.5 L18 21.5 L11.9 23.5 L13.5 17.9 L10.1 13.4 L16.6 13.4 Z" fill="url(#yel)" stroke="#151515" stroke-width="1.2" stroke-linejoin="round"/></g><g transform="translate(0,311)"><path d="M15 15.5 C15 13 18.5 13.5 18.5 16 C18.5 19.5 13 20 11.5 16.5 C10 12.5 13.5 9 17 9.2 C22 9.5 24 14.5 22.5 19 C21 23.5 15 25 10.5 22.5 C6 20 5 13 8.5 8.5 C12 4 20 3.5 24.5 8 C28 11.5 27.5 20 25 24.5" fill="none" stroke="#111" stroke-width="1.5"/></g><g transform="translate(0,341)"><path d="M5 4.7 L10.5 4.5 L5.5 15 L10.5 15.5 C12.5 17 10 24 14.5 26 C18 27.5 22.5 24.5 24.5 20" fill="none" stroke="#222" stroke-width="1.2"/><path d="M20 3 L26.8 9.5 L21 18.5 L15.5 23.5 L15.2 17 Z" fill="url(#pcl)" stroke="#222" stroke-width="0.8"/><path d="M15.3 17 L19 13 L22.5 16.5 L15.5 23.5 Z" fill="#fff4d8"/><path d="M15.4 20.5 L17.5 21.8 L15.5 23.8 Z" fill="#000"/></g><g transform="translate(0,371)"><path d="M5.5 4 L17 4 M6 4.5 C10 9 13 14 13 19 C13 24 9 26 6 25.5 L11.5 26" fill="none" stroke="#222" stroke-width="1.2"/><path d="M20 3 L27 8.5 L22.5 16 L18.5 14 Z" fill="url(#pen)" stroke="#222" stroke-width="0.8"/><path d="M18.5 14 L22.5 16 L21 18.5 L17.5 17 Z" fill="#f0c040" stroke="#222" stroke-width="0.6"/><path d="M18 17.5 L20 18.5 L16.5 25 Z" fill="#ddd" stroke="#222" stroke-width="0.6"/><rect x="4" y="23.5" width="4" height="4" fill="#fff" stroke="#000" stroke-width="1.2"/><rect x="14.5" y="24.2" width="2.5" height="2.5" fill="#fff" stroke="#000" stroke-width="0.8"/></g><g transform="translate(0,401)"><path d="M4.2 3.4 C8.5 3 12.8 5 13.6 9 C14.2 13 11 18 11.5 21 C12 24 16 24 20 22 C23 20.5 26 20.5 27.5 22.5 C24 21.5 21 24 17 25.3 C13 26.5 9.5 25 7.8 21 C6.3 17 7 11 6.6 8 C6.2 6 5.2 4.5 4.2 3.4 Z" fill="#111"/><path d="M18.5 7 L27.5 9.3 L25 14.5 L19.2 12.5 Z" fill="#5a9ec0" stroke="#222" stroke-width="0.6"/><path d="M19.2 12.3 L25 14.3 L24.6 15.6 L18.8 13.6 Z" fill="#d81818"/><path d="M14 13.8 L18.8 13.6 L24.6 15.6 L22.5 19.5 L15.2 24 Z" fill="#f2d44a" stroke="#111" stroke-width="0.9"/><circle cx="18" cy="15.2" r="0.9" fill="#111"/></g><g transform="translate(0,431)"><path d="M4 24.8 L11 4.2 L16 4.2 L23 24.8 L18 24.8 L16.7 20.5 L10.2 20.5 L9 24.8 Z M11.3 16.5 L15.6 16.5 L13.5 9.5 Z" fill="#111" fill-rule="evenodd"/><path d="M22.5 4.5 L27.5 4.5 M25 4.5 L25 25 M22.5 25 L27.5 25" stroke="#111" stroke-width="1" fill="none"/></g><g transform="translate(0,461)"><g fill="#111"><circle cx="6.5" cy="5.5" r="1.1"/><circle cx="9.5" cy="6" r="0.8"/><circle cx="6" cy="9" r="1"/><circle cx="9.5" cy="9.5" r="1"/><circle cx="12.5" cy="8" r="0.8"/><circle cx="8.5" cy="13.5" r="1.2"/><circle cx="12" cy="12" r="0.8"/><circle cx="14.5" cy="10.5" r="0.7"/></g><path d="M14.8 14 L24.9 12.5 L27.6 24 C27 26 21.5 27 20.2 26 Z" fill="url(#spr)" stroke="#1a4a10" stroke-width="0.9"/><path d="M16.5 9.5 C17 7.5 21.5 7.3 22 9 L22.5 12.8 L16.5 13.8 Z" fill="#f4f4f4" stroke="#222" stroke-width="0.9"/><path d="M15.5 12.8 L23.5 11.8 L23.8 13.4 L15.8 14.4 Z" fill="#f0a020"/></g><g transform="translate(0,491)"><path d="M6 19.6 L16.2 3.4 L24.9 9.5 L15.5 25 Z" fill="url(#ers)" stroke="#1a1a1a" stroke-width="1.2" stroke-linejoin="round"/></g><g transform="translate(0,521)"><ellipse cx="14.2" cy="24" rx="10" ry="2.3" fill="#a8dca0" stroke="#4a8a40" stroke-width="0.7"/><path d="M8.5 11 C9.5 16 11 20 12.5 23.5" fill="none" stroke="#5aae50" stroke-width="2.2"/><path d="M8.1 10.5 L20.9 3 L26.3 13.2 L14.2 20.6 Z" fill="url(#bkt)" stroke="#10202a" stroke-width="1.1" stroke-linejoin="round"/><ellipse cx="11.2" cy="15.5" rx="2.2" ry="5.6" transform="rotate(-30 11.2 15.5)" fill="#7ac070" stroke="#10202a" stroke-width="0.8"/><path d="M10 8.5 C10 5 12.5 4.5 13.5 6.5 L14.5 15" fill="none" stroke="#333" stroke-width="0.8"/></g><g transform="translate(0,551)"><rect x="2.5" y="0.5" width="28.5" height="28.5" rx="3" fill="#c4c8d6" stroke="#7c808c" stroke-width="1"/><rect x="5" y="3.2" width="22.3" height="22.8" fill="url(#grn)"/><line x1="8.2" y1="8.7" x2="22.8" y2="19.6" stroke="#111" stroke-width="1.2"/><rect x="5.9" y="6.4" width="4.6" height="4.6" fill="#fff" stroke="#111" stroke-width="1"/><rect x="20.5" y="17.3" width="4.6" height="4.6" fill="#fff" stroke="#111" stroke-width="1"/></g><g transform="translate(0,581)"><path d="M20.5 4.5 C22 2 26 2 27 5 C28 7 26.5 9.5 24.5 10.5 L21.5 13.5 L17 9 Z" fill="#111"/><path d="M18 10 L20.5 12.5 L10 23 L7.5 20.5 Z" fill="#a8d0e8" stroke="#222" stroke-width="0.9"/><path d="M8 22 C6.5 24 6 26 8 26.3 C10 26.5 9.5 24 8 22 Z" fill="#5a90c0" stroke="#222" stroke-width="0.7"/></g><g transform="translate(0,611)"><path d="M10.5 10 L8.2 19.5 M17.8 6.5 L23.8 10.1 L23.8 19.5" fill="none" stroke="#111" stroke-width="1"/><rect x="9.1" y="3.3" width="8.7" height="6.8" fill="url(#box)" stroke="#111" stroke-width="1.1"/><rect x="12.3" y="12.4" width="8.3" height="5" fill="#ffd040" stroke="#222" stroke-width="1"/><rect x="4.1" y="19.3" width="8.2" height="7.3" fill="url(#box)" stroke="#111" stroke-width="1.1"/><rect x="19.2" y="19.3" width="8.2" height="7.3" fill="url(#box)" stroke="#111" stroke-width="1.1"/></g><rect x="2.8" y="549" width="33.6" height="34.5" fill="none" stroke="#c80000" stroke-width="3"/></svg>
<svg class="a" style="left:0;top:0" width="873" height="712" viewBox="0 0 873 712">
<text x="433" y="76" font-family="Liberation Sans" font-size="21" fill="#c80000" textLength="372" lengthAdjust="spacingAndGlyphs">Die Richtung des Verlaufs umkehren</text>
<line x1="436" y1="85" x2="793" y2="85" stroke="#b81414" stroke-width="2"/>
<polyline points="364,329 436,85 551,440" stroke="#b80c0c" stroke-width="1.6" fill="none" stroke-linejoin="miter"/>
<polyline points="365.5,304.5 363.5,329.5 376,306.5" stroke="#b80c0c" stroke-width="1.6" fill="none"/>
<polyline points="540.2,420.3 551,440 547.4,416.1" stroke="#b80c0c" stroke-width="1.6" fill="none"/>
<line x1="445.8" y1="41" x2="445.8" y2="59" stroke="#b80c0c" stroke-width="1.6"/>
<polyline points="442,50 445.8,59.5 449.5,50" stroke="#b80c0c" stroke-width="1.4" fill="none"/>
</svg>
</body></html>
